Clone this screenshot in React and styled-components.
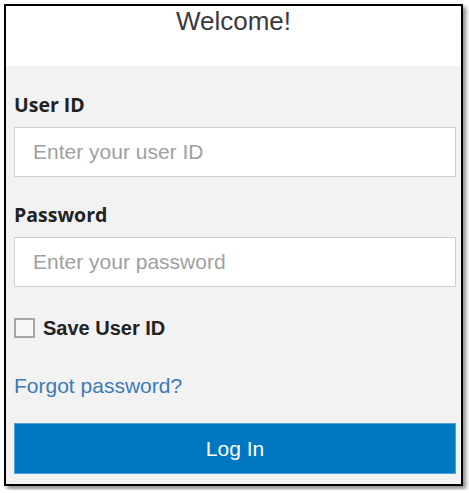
import React from 'react';
import styled, { createGlobalStyle } from 'styled-components';

const GlobalStyle = createGlobalStyle`
	html, body {
		margin: 0;
		padding: 0;
		background: #ffffff;
	}
	body {
		font-family: 'Liberation Sans', Arial, sans-serif;
	}
`;

const App = () => {
	return (
		<>
			<GlobalStyle />
			<Page>
				<Frame>
					<Header>Welcome!</Header>
					<Body>
						<Label htmlFor="user-id">User ID</Label>
						<Input id="user-id" type="text" placeholder="Enter your user ID" />
						<Label htmlFor="password" $top={27}>
							Password
						</Label>
						<Input id="password" type="password" placeholder="Enter your password" />
						<CheckRow>
							<Box type="checkbox" />
							<span>Save User ID</span>
						</CheckRow>
						<Link href="#">Forgot password?</Link>
						<Button type="button">Log In</Button>
					</Body>
				</Frame>
			</Page>
		</>
	);
};
export default App;

const Page = styled.div`
	padding: 4px;
`;

const Frame = styled.div`
	width: 455px;
	height: 478px;
	border: 2px solid #000;
	box-shadow: 3px 3px 4px rgba(0, 0, 0, 0.45);
	display: flex;
	flex-direction: column;
	background: #f2f2f2;
`;

const Header = styled.div`
	height: 60px;
	background: #fff;
	text-align: center;
	font-size: 26px;
	line-height: 30px;
	color: #3a3a3a;
`;

const Body = styled.div`
	flex: 1;
	display: flex;
	flex-direction: column;
	padding: 28px 5px 0 8px;
`;

const Label = styled.label`
	display: block;
	font-family: 'Open Sans', sans-serif;
	font-weight: 700;
	font-size: 19.5px;
	line-height: 22px;
	color: #222;
	margin-top: ${({ $top }) => ($top ? `${$top}px` : '0')};
	margin-bottom: 11px;
`;

const Input = styled.input`
	box-sizing: border-box;
	width: 442px;
	height: 50px;
	border: 1px solid #cfcfcf;
	background: #fff;
	padding: 0 18px;
	font-family: 'Liberation Sans', Arial, sans-serif;
	font-size: 21px;
	color: #333;
	outline: none;
	&::placeholder {
		color: #a0a0a0;
	}
`;

const CheckRow = styled.label`
	display: flex;
	align-items: center;
	gap: 8px;
	margin-top: 31px;
	height: 20px;
	font-size: 20px;
	font-weight: 700;
	color: #222;
`;

const Box = styled.input`
	appearance: none;
	margin: 0;
	width: 21px;
	height: 20px;
	box-sizing: border-box;
	border: 2px solid #a6a6a6;
	background: #f7f7f7;
`;

const Link = styled.a`
	margin-top: 36px;
	font-size: 21px;
	line-height: 24px;
	color: #3d7ab5;
	text-decoration: none;
	align-self: flex-start;
`;

const Button = styled.button`
	margin-top: 25px;
	width: 442px;
	height: 51px;
	border: 1px solid #4fa3dc;
	background: #0078c1;
	color: #fff;
	font-family: 'Liberation Sans', Arial, sans-serif;
	font-size: 21px;
	cursor: pointer;
`;
